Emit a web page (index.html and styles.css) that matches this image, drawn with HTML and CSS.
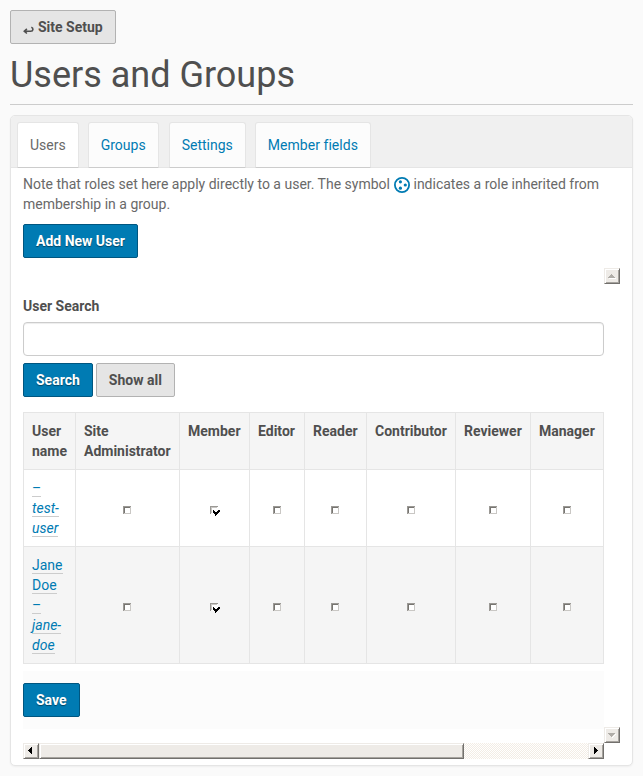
FILE: index.html
```html
<!DOCTYPE html>
<html lang="en">
<head>
<meta charset="utf-8">
<title>Users and Groups</title>
<link rel="stylesheet" href="styles.css">
</head>
<body>
<svg class="defs" aria-hidden="true">
  <symbol id="box" viewBox="0 0 12 12" shape-rendering="crispEdges">
    <path fill="#fff" d="M2 2h8v8H2z"/>
    <path fill="#c9c7c4" d="M9 2h1v8H2V9h7z"/>
    <path fill="#9b9995" d="M2 2h8v1H3v7H2z"/>
    <path fill="#777571" d="M3 3h6v1H4v5H3z"/>
  </symbol>
  <symbol id="checked" viewBox="0 0 12 12" shape-rendering="crispEdges">
    <path fill="#fff" d="M2 2h8v8H2z"/>
    <path fill="#9b9995" d="M2 2h8v1H3v7H2z"/>
    <path fill="#c9c7c4" d="M3 3h6v1H4v5H3z"/>
    <path d="M5 6h1v3H5zM6 7h1v3H6zM7 8h1v4H7zM8 8h1v3H8zM9 7h1v3H9zM10 6h1v3h-1zM11 6h1v2h-1z"/>
  </symbol>
</svg>
<a class="btn standard back"><svg class="return" viewBox="0 0 11 9"><path d="M8.3 1.3c2.4.9 2.1 3.9-.6 3.9H2M3.9 2.9 1.3 5.2l2.6 2.3"/></svg>Site Setup</a>
<h1>Users and Groups</h1>
<main class="panel">
  <nav class="tabs">
    <a class="tab current">Users</a><a class="tab">Groups</a><a class="tab settings">Settings</a><a class="tab fields">Member fields</a>
  </nav>
  <div class="content">
    <p class="note">Note that roles set here apply directly to a user. The symbol <svg class="group" viewBox="0 0 16 16"><circle cx="8" cy="8" r="7.1" fill="none" stroke="#007bb3" stroke-width="1.8"/><g fill="#007bb3"><circle cx="6.4" cy="4.8" r="1.6"/><circle cx="11.3" cy="8" r="1.6"/><circle cx="6.4" cy="11.2" r="1.6"/></g></svg> indicates a role inherited from membership in a group.</p>
    <button class="btn primary">Add New User</button>
    <div class="scroller">
      <div class="view">
        <label for="search">User Search</label>
        <input id="search" type="text">
        <div class="actions"><button class="btn primary">Search</button><button class="btn standard">Show all</button></div>
        <table>
          <colgroup><col class="c1"><col class="c2"><col class="c3"><col class="c4"><col class="c5"><col class="c6"><col class="c7"><col class="c8"></colgroup>
          <thead><tr><th>User name</th><th>Site Administrator</th><th>Member</th><th>Editor</th><th>Reader</th><th>Contributor</th><th>Reviewer</th><th>Manager</th></tr></thead>
          <tbody>
            <tr><td><a>– <em>test-user</em></a></td><td><svg class="check"><use href="#box"/></svg></td><td><svg class="check"><use href="#checked"/></svg></td><td><svg class="check"><use href="#box"/></svg></td><td><svg class="check"><use href="#box"/></svg></td><td><svg class="check"><use href="#box"/></svg></td><td><svg class="check"><use href="#box"/></svg></td><td><svg class="check"><use href="#box"/></svg></td></tr>
            <tr class="odd"><td><a>Jane Doe – <em>jane-doe</em></a></td><td><svg class="check"><use href="#box"/></svg></td><td><svg class="check"><use href="#checked"/></svg></td><td><svg class="check"><use href="#box"/></svg></td><td><svg class="check"><use href="#box"/></svg></td><td><svg class="check"><use href="#box"/></svg></td><td><svg class="check"><use href="#box"/></svg></td><td><svg class="check"><use href="#box"/></svg></td></tr>
          </tbody>
        </table>
        <div class="controls"><button class="btn primary">Save</button></div>
      </div>
      <div class="vbar">
        <span class="arrow"><svg viewBox="0 0 16 16" shape-rendering="crispEdges"><path fill="#fff" d="M5 10h7v1H5z"/><path fill="#b0ada8" d="M7 6h1v1h1v1h1v1h1v1H4V9h1V8h1V7h1z"/></svg></span>
        <span class="arrow"><svg viewBox="0 0 16 16" shape-rendering="crispEdges"><path fill="#fff" d="M11 7h1v1h-1v1h-1v1H9v1H8v-1h1V9h1V8h1z"/><path fill="#b0ada8" d="M4 6h7v1h-1v1H9v1H8v1H7V9H6V8H5V7H4z"/></svg></span>
      </div>
      <div class="hbar">
        <span class="arrow"><svg viewBox="0 0 16 16" shape-rendering="crispEdges"><path d="M9 4v7H8v-1H7V9H6V8H5V7h1V6h1V5h1V4z"/></svg></span>
        <span class="thumb"></span>
        <span class="arrow last"><svg viewBox="0 0 16 16" shape-rendering="crispEdges"><path d="M6 4v7h1v-1h1V9h1V8h1V7H9V6H8V5H7V4z"/></svg></span>
      </div>
    </div>
  </div>
</main>
</body>
</html>
```
FILE: styles.css
```css
* { box-sizing: border-box; }
body {
  margin: 0;
  padding: 10px;
  height: 776px;
  background: #fafafa;
  color: #696969;
  font: 14px/20px Roboto, sans-serif;
}
.defs { position: absolute; width: 0; height: 0; }
.btn {
  display: inline-block;
  height: 34px;
  padding: 6px 12px;
  border: 1px solid;
  border-radius: 2px;
  font: bold 14px/20px Roboto, sans-serif;
  white-space: nowrap;
}
.primary { background: #007bb3; border-color: #005680; color: #fff; text-shadow: 0 1px 1px rgba(0, 0, 0, .45); }
.standard { background: #e5e5e5; border-color: #b2b2b2; color: #4f4f4f; }
.back { display: flex; align-items: center; width: 106px; }
.return { flex: none; width: 11px; height: 9px; margin: 6px 4px 0 0; fill: none; stroke: #4f4f4f; stroke-width: 1.6; }
h1 {
  margin: 10px 0;
  padding: 1px 0 9px;
  height: 51px;
  border-bottom: 1px solid #ccc;
  color: #4f4f4f;
  font: 400 36px/40px Roboto, sans-serif;
}
.panel {
  height: 651px;
  border: 1px solid #e5e5e5;
  border-radius: 5px;
  background: #fff;
  box-shadow: 0 1px 2px rgba(0, 0, 0, .05);
}
.tabs {
  display: flex;
  gap: 9px;
  height: 52px;
  padding: 6px 6px 0;
  border-bottom: 1px solid #e5e5e5;
  border-radius: 4px 4px 0 0;
  background: #f0f0f0;
}
.tab {
  height: 46px;
  padding: 12px 12px 0;
  border: 1px solid #e5e5e5;
  border-bottom-color: #ccc;
  border-radius: 3px 3px 0 0;
  background: #fcfcfc;
  color: #007bb3;
  white-space: nowrap;
}
.tab.current { background: #fff; color: #696969; }
.settings { margin-left: 1px; }
.fields { width: 116px; letter-spacing: .04px; }
.content { padding: 6px 12px 0; }
.note { margin: 0 0 10px; }
.group { width: 16px; height: 16px; margin-left: .6px; vertical-align: -4px; }
.content > .btn { display: block; }
.scroller {
  display: grid;
  grid-template-columns: 581px 16px;
  grid-template-rows: 475px 16px;
  margin-top: 10px;
}
.view { padding-top: 28px; }
label { display: block; color: #4f4f4f; font-weight: bold; }
input {
  display: block;
  width: 100%;
  height: 34px;
  margin: 6px 0 7px;
  border: 1px solid #ccc;
  border-radius: 4px;
  background: #fff;
  box-shadow: inset 0 1px 1px rgba(0, 0, 0, .075);
}
.actions { display: flex; gap: 3px; }
table {
  width: 581px;
  margin: 15px 0 7px;
  border: solid #e5e5e5;
  border-width: 1px 0 0 1px;
  border-spacing: 0;
  table-layout: fixed;
}
.c1 { width: 52px; }
.c2 { width: 104px; }
.c3 { width: 70px; }
.c4 { width: 55px; }
.c5 { width: 62px; }
.c6 { width: 89px; }
.c7 { width: 75px; }
.c8 { width: 73px; }
th, td {
  padding: 8px;
  border: solid #e5e5e5;
  border-width: 0 1px 1px 0;
  text-align: center;
}
th { background: #f5f5f5; color: #4f4f4f; text-align: left; vertical-align: top; }
td:first-child { text-align: left; }
/* Even-width columns centre on a half pixel; keep the boxes on the grid. */
td:nth-child(2), td:nth-child(3), td:nth-child(5) { padding-right: 9px; }
.odd { background: #f5f5f5; }
td a { border-bottom: 1px solid #ccc; color: #007bb3; }
.check { display: block; width: 12px; height: 12px; margin: 4px auto 0; }
.controls { height: 58px; padding-top: 12px; background: #fcfcfc; }
.vbar { display: flex; flex-direction: column; justify-content: space-between; }
.hbar {
  display: flex;
  background: repeating-conic-gradient(#f3ede5 0 25%, #fff 0 50%) 0 0 / 2px 2px;
}
.arrow, .thumb {
  height: 16px;
  border: 1px solid;
  border-color: #eeebe7 #72706d #72706d #eeebe7;
  background: #eeebe7;
  box-shadow: inset 1px 1px #fff, inset -1px -1px #a6a39e;
}
.arrow { width: 16px; flex: none; }
.arrow svg { display: block; width: 16px; height: 16px; margin: -1px; }
.thumb { width: 425px; }
.last { margin-left: auto; }
```
